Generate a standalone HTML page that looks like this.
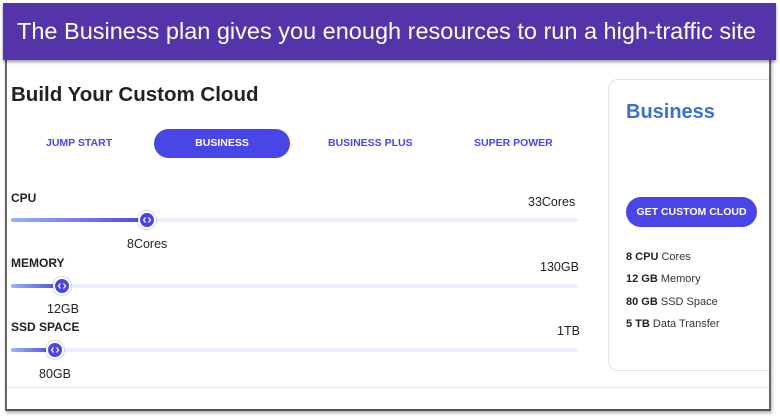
<!DOCTYPE html>
<html><head><style>
*{margin:0;padding:0;box-sizing:border-box}
body{width:780px;height:418px;background:#fff;position:relative;overflow:hidden;font-family:"Liberation Sans",sans-serif;color:#222}
.frame{position:absolute;left:5px;top:55px;width:766px;height:356px;border-left:2px solid #666;border-right:2px solid #666;border-bottom:2px solid #555;box-shadow:1px 2px 3px rgba(0,0,0,.3);overflow:hidden}
.banner{position:absolute;left:3px;top:3px;width:773px;height:57px;background:#5533a8;box-shadow:0 2px 3px rgba(0,0,0,.4);color:#fff;font-size:23.5px;line-height:57px;padding-left:14px;letter-spacing:0}
.a{position:absolute;white-space:nowrap}
h1{position:absolute;left:11px;top:83px;font-size:20.5px;font-weight:bold;color:#222}
.tab{position:absolute;top:137px;font-size:10.5px;font-weight:bold;color:#4a45e6}
.pill{position:absolute;left:154px;top:129px;width:136px;height:29px;border-radius:15px;background:#4a45e6;color:#fff;font-size:10.5px;font-weight:bold;text-align:center;line-height:29px}
.lbl{font-size:12px;font-weight:bold;color:#222}
.val{font-size:12.5px;color:#222}
.track{position:absolute;left:11px;width:567px;height:4px;border-radius:2px;background:#eceeff}
.fill{position:absolute;left:0;top:0;height:4px;border-radius:2px;background:linear-gradient(90deg,#9ab4f5,#4a45e6)}
.th{position:absolute;width:18px;height:18px;border-radius:50%;background:#4a45e6;border:2px solid #fff;box-shadow:0 0 2px rgba(0,0,0,.4)}
.th svg{position:absolute;left:2px;top:2px}
.card{position:absolute;left:601px;top:24px;width:180px;height:292px;border:1px solid #e2e2e2;border-radius:10px}
.sep{position:absolute;left:0;top:332px;width:766px;height:1px;background:#e6e6e6}
.f{font-size:11px;color:#333}
.f b{color:#222}
</style></head><body>
<div class="frame"><div class="card"></div><div class="sep"></div></div>
<div class="banner">The Business plan gives you enough resources to run a high-traffic site</div>
<h1>Build Your Custom Cloud</h1>
<div class="tab" style="left:46px">JUMP START</div>
<div class="pill">BUSINESS</div>
<div class="tab" style="left:328px">BUSINESS PLUS</div>
<div class="tab" style="left:474px">SUPER POWER</div>

<div class="a lbl" style="left:11px;top:191px">CPU</div>
<div class="a val" style="left:528px;top:195px">33Cores</div>
<div class="track" style="top:218px"><div class="fill" style="width:136px"></div></div>
<div class="th" style="left:138px;top:211px"><svg width="10" height="10" viewBox="0 0 10 10"><path d="M3.5 2.5L1.5 5L3.5 7.5M6.5 2.5L8.5 5L6.5 7.5" stroke="#fff" stroke-width="1.2" fill="none"/></svg></div>
<div class="a val" style="left:127px;top:237px">8Cores</div>

<div class="a lbl" style="left:11px;top:256px">MEMORY</div>
<div class="a val" style="left:540px;top:260px">130GB</div>
<div class="track" style="top:284px"><div class="fill" style="width:51px"></div></div>
<div class="th" style="left:53px;top:277px"><svg width="10" height="10" viewBox="0 0 10 10"><path d="M3.5 2.5L1.5 5L3.5 7.5M6.5 2.5L8.5 5L6.5 7.5" stroke="#fff" stroke-width="1.2" fill="none"/></svg></div>
<div class="a val" style="left:47px;top:302px">12GB</div>

<div class="a lbl" style="left:11px;top:320px">SSD SPACE</div>
<div class="a val" style="left:557px;top:324px">1TB</div>
<div class="track" style="top:348px"><div class="fill" style="width:44px"></div></div>
<div class="th" style="left:46px;top:341px"><svg width="10" height="10" viewBox="0 0 10 10"><path d="M3.5 2.5L1.5 5L3.5 7.5M6.5 2.5L8.5 5L6.5 7.5" stroke="#fff" stroke-width="1.2" fill="none"/></svg></div>
<div class="a val" style="left:39px;top:367px">80GB</div>

<div class="a" style="left:626px;top:101px;font-size:20px;font-weight:bold;color:#3b6fd4">Business</div>
<div class="a" style="left:626px;top:197px;width:131px;height:30px;border-radius:15px;background:#4a45e6;color:#fff;font-size:10.5px;font-weight:bold;text-align:center;line-height:30px">GET CUSTOM CLOUD</div>
<div class="a f" style="left:626px;top:251px"><b>8 CPU</b> Cores</div>
<div class="a f" style="left:626px;top:273px"><b>12 GB</b> Memory</div>
<div class="a f" style="left:626px;top:296px"><b>80 GB</b> SSD Space</div>
<div class="a f" style="left:626px;top:318px"><b>5 TB</b> Data Transfer</div>
</body></html>
